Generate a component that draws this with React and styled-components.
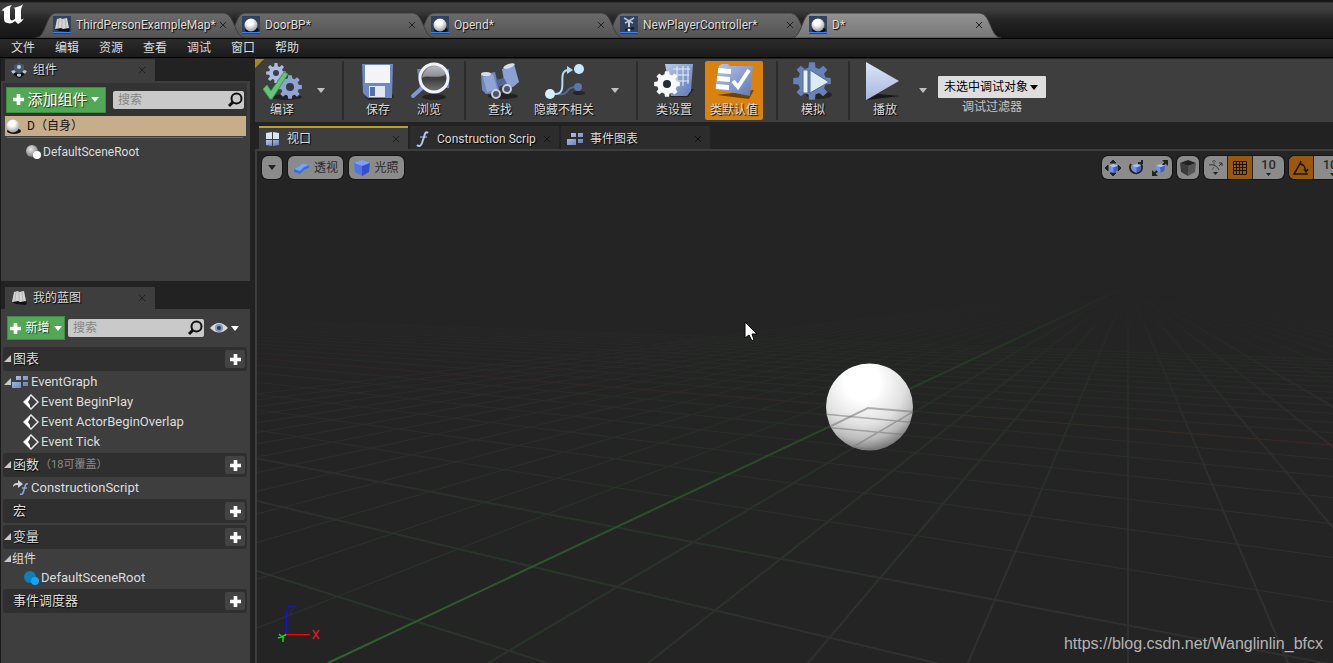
import React, { useState } from 'react';
import styled, { createGlobalStyle } from 'styled-components';

const GlobalStyle = createGlobalStyle`
  * {
    box-sizing: border-box;
  }

  body {
    margin: 0;
    background: #222;
    color: #dcdcdc;
    font-family: Roboto, 'Noto Sans CJK SC', sans-serif;
    font-size: 13px;
    line-height: 20px;
  }

  button, input, select {
    font: inherit;
    color: inherit;
    border: 0;
    margin: 0;
    padding: 0;
    background: none;
  }

  svg {
    display: block;
    flex: none;
  }
`;

const Page = styled.div`
  display: flex;
  flex-direction: column;
  min-height: 100vh;
  overflow: hidden;
`;

const TitleBar = styled.header`
  display: flex;
  align-items: flex-end;
  height: 38px;
  background: linear-gradient(#141414 0, #1c1c1c 2px, #414141 3px, #3c3c3c 10px, #242424 20px, #151515 38px);
`;

const LogoBox = styled.div`
  width: 36px;
  height: 38px;
  padding: 4px 0 0 1px;
`;

const FileTab = styled.div`
  position: relative;
  display: flex;
  align-items: center;
  width: 209px;
  height: 25px;
  margin-right: -20px;
  padding: 0 17px 2px 17px;
  z-index: ${props => props.order};
  font-size: 12px;
  text-shadow: 1px 1px 1px #000;
`;

const FileTabShape = styled.svg`
  position: absolute;
  inset: 0;
  z-index: -1;
`;

const FileTabName = styled.button`
  width: 143px;
  margin-left: 5px;
  text-align: left;
  white-space: nowrap;
  text-shadow: inherit;
`;

const CloseButton = styled.button`
  display: flex;
  align-items: center;
  justify-content: center;
  width: 10px;
  height: 16px;
  color: ${props => props.tone || '#222'};
`;

const MenuBar = styled.nav`
  display: flex;
  gap: 20px;
  height: 20px;
  padding-left: 11px;
  border-top: 1px solid #000;
  border-bottom: 1px solid #000;
  background: linear-gradient(#2b2b2b, #1b1b1b);
`;

const MenuItem = styled.button`
  font-size: 12px;
  line-height: 18px;
`;

const Workspace = styled.div`
  display: flex;
  flex: 1;
  gap: 5px;
`;

const Sidebar = styled.aside`
  display: flex;
  flex-direction: column;
  width: 250px;
  border-left: 1px solid #1a1a1a;
`;

const PanelTab = styled.div`
  display: flex;
  align-items: center;
  width: 150px;
  height: 22px;
  margin: ${props => props.top}px 0 0 4px;
  padding: 0 8px 0 6px;
  background: #3e3e3e;
  font-size: 12px;
  text-shadow: 1px 1px 1px #000;

  span {
    flex: 1;
    margin-left: 6px;
  }
`;

const PanelBody = styled.section`
  background: #3e3e3e;
  padding: 2px 3px 2px 2px;
  ${props => (props.fill ? 'flex: 1;' : 'height: 200px;')}
`;

const PanelToolbar = styled.div`
  display: flex;
  align-items: center;
  gap: ${props => (props.small ? 3 : 7)}px;
  height: ${props => (props.small ? 34 : 33)}px;
  padding: 0 ${props => (props.small ? 4 : 3)}px;
  background: ${props => (props.small ? 'none' : '#333')};
`;

const GreenButton = styled.button`
  display: flex;
  align-items: center;
  justify-content: center;
  gap: ${props => (props.small ? 4 : 3)}px;
  width: ${props => (props.small ? 58 : 102)}px;
  height: ${props => (props.small ? 24 : 26)}px;
  border: 1px solid #3f8c42;
  background: #52a854;
  color: #fff;
  font-size: ${props => (props.small ? 12 : 15)}px;
  white-space: nowrap;
  text-shadow: 1px 1px 1px #1a3a1a;
`;

const SearchBox = styled.label`
  display: flex;
  align-items: center;
  width: ${props => (props.small ? 136 : 131)}px;
  height: 18px;
  border-radius: 2px;
  background: #c9c9c9;

  input {
    flex: 1;
    min-width: 0;
    padding-left: 5px;
    color: #222;
    font-size: 12px;
    line-height: 18px;
    outline: none;
  }

  input::placeholder {
    color: #858585;
    opacity: 1;
  }
`;

const EyeButton = styled.button`
  display: flex;
  align-items: center;
  gap: 3px;
  margin-left: 3px;
`;

const SelfRow = styled.div`
  display: flex;
  align-items: center;
  gap: 6px;
  height: 20px;
  margin: 0 1px 0 2px;
  background: #c8ad8a;
  color: #111;
  font-size: 12px;
`;

const RowDivider = styled.div`
  height: 1px;
  margin: 1px 4px 3px;
  background: #6a6a6a;
`;

const TreeRow = styled.div`
  display: flex;
  align-items: center;
  height: ${props => (props.short ? 18 : 20)}px;
  padding: 1px 0 0 ${props => props.indent}px;
  font-size: ${props => (props.compact || props.short ? 12 : 13)}px;
  white-space: nowrap;
`;

const RowText = styled.span`
  margin-left: 2px;
`;

const SectionHeader = styled.div`
  display: flex;
  align-items: center;
  height: 24px;
  margin-top: 2px;
  padding-right: 2px;
  border-radius: 3px;
  background: #2f2f2f;
  text-shadow: 1px 1px 1px #000;
`;

const SectionName = styled.span`
  flex: 1;
  display: flex;
  align-items: center;
  gap: 1px;
  padding-left: ${props => (props.leaf ? 10 : 0)}px;
`;

const SectionNote = styled.small`
  color: #8a8a8a;
  font-size: 11px;
  text-shadow: none;
`;

const AddButton = styled.button`
  display: flex;
  align-items: center;
  justify-content: center;
  width: 20px;
  height: 18px;
  border-radius: 2px;
  background: #434343;
  color: #fff;
`;

const Main = styled.main`
  display: flex;
  flex-direction: column;
  flex: 1;
  min-width: 0;
`;

const Toolbar = styled.div`
  display: flex;
  align-items: stretch;
  height: 63px;
  margin-top: 1px;
  padding: 2px 0;
  background: linear-gradient(135deg, #a8871c 6px, #3e3e3e 7px);
`;

const Tool = styled.button`
  display: flex;
  flex-direction: column;
  align-items: center;
  width: ${props => props.width}px;
  margin: ${props => (props.active ? '0 4px' : 0)};
  padding-top: 1px;
  border-radius: 2px;
  background: ${props => (props.active ? '#d9820f' : 'none')};
  font-size: 12px;
  line-height: 17px;
  white-space: nowrap;
  text-shadow: 1px 1px 1px #000;
`;

const ToolArrow = styled.button`
  display: flex;
  align-items: center;
  justify-content: center;
  width: 24px;
`;

const Separator = styled.div`
  width: 2px;
  margin: 0 9px;
  background: #2b2b2b;
`;

const DebugFilter = styled.label`
  display: flex;
  flex-direction: column;
  align-items: center;
  margin-left: 3px;
  padding-top: 15px;
  font-size: 12px;
  line-height: 18px;
  color: #c4c4c4;
`;

const SelectWrap = styled.span`
  display: flex;
  align-items: center;
  width: 108px;
  height: 22px;
  padding: 0 8px 0 6px;
  border-radius: 1px;
  background: #dedede;
  color: #000;

  select {
    flex: 1;
    min-width: 0;
    appearance: none;
    line-height: 20px;
    outline: none;
  }
`;

const DocTabs = styled.div`
  display: flex;
  gap: 2px;
  padding: 4px 0 0 4px;
  border-bottom: 2px solid #3e3e3e;
`;

const DocTab = styled.div`
  display: flex;
  align-items: center;
  width: 149px;
  height: 23px;
  padding: 0 7px 0 6px;
  border-top: 2px solid ${props => (props.active ? '#bfa01e' : '#2c2c2c')};
  background: ${props => (props.active ? '#3e3e3e' : '#2c2c2c')};
  font-size: 12px;
  text-shadow: 1px 1px 1px #000;

  span {
    flex: 1;
    margin-left: 6px;
    white-space: nowrap;
  }
`;

const Viewport = styled.section`
  position: relative;
  flex: 1;
  display: flex;
  flex-direction: column;
  justify-content: space-between;
  min-height: 500px;
  overflow: hidden;
  border-left: 2px solid #3e3e3e;
  background: #242424;
`;

const Scene = styled.svg`
  position: absolute;
  inset: 0;
  width: 100%;
  height: 100%;
`;

const ViewToolbar = styled.div`
  position: relative;
  display: flex;
  gap: 6px;
  margin-right: -18px;
  padding: 5px 0 0 5px;
`;

const ViewGroup = styled.div`
  display: flex;
  height: 23px;
  border-radius: 6px;
  overflow: hidden;
  background: #8b8b8b;
  box-shadow: 0 0 0 1px #151515;
  margin-left: ${props => (props.push ? 'auto' : 0)};
  margin-right: ${props => (props.tight ? -1 : 0)}px;
`;

const ViewButton = styled.button`
  position: relative;
  display: flex;
  align-items: center;
  justify-content: center;
  gap: 4px;
  width: ${props => props.width}px;
  border-right: ${props => (props.split ? '1px solid #222' : 0)};
  background: ${props => (props.on ? '#98590f' : 'none')};
  color: #2b2b2b;
  font-size: 12px;
`;

const SnapButton = styled(ViewButton)`
  flex-direction: column;
  gap: 0;
  font-size: 13px;
  font-weight: 500;
  line-height: 14px;
`;

const Watermark = styled.a`
  position: relative;
  align-self: flex-end;
  padding: 0 10px 8px 0;
  color: #b4b4b4;
  font-family: 'Liberation Sans', Arial, sans-serif;
  font-size: 16px;
  line-height: 22px;
  text-decoration: none;
`;

const Close = () => (
  <svg width="6" height="6" viewBox="0 0 6 6" stroke="currentColor" strokeWidth="1">
    <path d="M0 0L6 6M6 0L0 6" />
  </svg>
);

const Plus = ({ size = 11 }) => (
  <svg width={size} height={size} viewBox="0 0 12 12" fill="#fff">
    <path d="M4 0h4v4h4v4H8v4H4V8H0V4h4z" />
  </svg>
);

const Arrow = ({ color = '#fff', width = 8 }) => (
  <svg width={width} height="5" viewBox="0 0 8 5" fill={color}>
    <path d="M0 0H8L4 5z" />
  </svg>
);

const Expander = () => (
  <svg width="9" height="8" viewBox="0 0 9 8" fill="#c8c8c8">
    <path d="M8 0V7H1z" />
  </svg>
);

const Magnifier = () => (
  <svg width="17" height="16" viewBox="0 0 17 16" fill="none" stroke="#111">
    <circle cx="9.500" cy="6.500" r="5" strokeWidth="2" />
    <path d="M6 10L2 14" strokeWidth="3" />
  </svg>
);

const Eye = () => (
  <svg width="18" height="12" viewBox="0 0 18 12">
    <path d="M0 6Q9 -4 18 6Q9 15 0 6z" fill="#d5d8dc" />
    <circle cx="9" cy="6" r="4" fill="#8298be" />
    <circle cx="9" cy="6" r="2" fill="#2b3c5c" />
  </svg>
);

const Logo = () => (
  <svg width="24" height="22" viewBox="0 0 24 22" fill="#fff">
    <path d="M0 8C2 4 6 2 11 1C9 3 9 4 9 6V14C9 16 11 17 12 16L14 15V5C14 4 13 4 12 4C15 3 19 3 22 0C21 3 20 4 20 6V14C20 16 21 16 23 14C22 17 19 19 17 20L14 17C12 19 9 20 7 19C5 19 3 18 3 15V8C3 6 1 6 0 8z" />
  </svg>
);

const SphereIcon = ({ size = 16 }) => (
  <svg width={size} height={size} viewBox="0 0 16 16">
    <ellipse cx="9" cy="13" rx="7" ry="3" fill="#111" />
    <circle cx="8" cy="8" r="6.500" fill="url(#ball)" />
  </svg>
);

const RootIcon = ({ blue }) => (
  <svg width="16" height="16" viewBox="0 0 16 16">
    <circle cx="7" cy="7" r="6" fill={blue ? '#0d7fbe' : 'url(#ballDim)'} />
    <circle cx="12" cy="11" r="4" fill={blue ? '#12a5ff' : '#fff'} />
  </svg>
);

const BookIcon = () => (
  <svg width="16" height="16" viewBox="0 0 16 16">
    <path d="M1 12L5 14L15 15L16 12L12 10z" fill="#111" />
    <path d="M3 2L7 1L8 2L13 1L15 11L9 12L7 11L1 12z" fill="#d4d4d4" />
    <path d="M8 2V11M5 2L4 11M11 2L12 11" stroke="#b4b4b4" fill="none" />
  </svg>
);

const ControllerIcon = () => (
  <svg width="16" height="16" viewBox="0 0 16 16" fill="none" stroke="#bcc7d4">
    <path d="M3 1L8 4L13 1M4 6L8 4L12 6" strokeWidth="1.500" />
    <path d="M8 5V10" strokeWidth="2" />
    <path d="M4 13L13 11" stroke="#141a26" strokeWidth="2" />
    <circle cx="8" cy="13" r="1" fill="#fff" stroke="#fff" />
  </svg>
);

const TabIcon = ({ kind }) => (
  <svg width="18" height="18" viewBox="0 0 18 18">
    <rect width="18" height="18" fill="#31425f" />
    <g transform="translate(1 1)">
      {kind === 'map' && <BookIcon />}
      {kind === 'ball' && <SphereIcon />}
      {kind === 'controller' && <ControllerIcon />}
    </g>
    <rect y="16" width="18" height="1" fill="#3f82f2" />
  </svg>
);

const ComponentsIcon = () => (
  <svg width="16" height="15" viewBox="0 0 16 15">
    <path d="M2 9L8 14L14 9" stroke="#101010" strokeWidth="3" fill="none" />
    <path d="M3 2L8 0L13 2V8L8 10L3 8z" fill="#46566e" />
    <circle cx="8" cy="4" r="2" fill="#b9c9de" />
    <path d="M0 8L3 7L5 9L2 11zM16 8L13 7L11 9L14 11zM6 11h4v2l-2 1l-2 -1z" fill="#b8c3d2" />
  </svg>
);

const GraphIcon = () => (
  <svg width="17" height="14" viewBox="0 0 17 14" fill="url(#steel)">
    <path d="M4 1h5v4H4zM11 1h5v4h-5zM0 7h9v6H0zM11 7h5v4h-5z" />
  </svg>
);

const ViewportIcon = () => (
  <svg width="16" height="16" viewBox="0 0 16 16" fill="url(#steel)">
    <path d="M1 2L7 1V8H1zM8 1L14 2V8H8z" fill="#dbe6f5" />
    <path d="M1 9h6v6L1 14zM8 9h6v5L8 15z" />
  </svg>
);

const FunctionIcon = () => (
  <svg width="15" height="18" viewBox="0 0 15 18" fill="none" stroke="#b7c6ee">
    <path d="M12 3C10 1 9 3 8 7L6 13C5 16 3 17 1 15" strokeWidth="2" />
    <path d="M4 7H11" />
  </svg>
);

const ScriptIcon = () => (
  <svg width="17" height="17" viewBox="0 0 17 17" fill="none">
    <path d="M1 8C1 4 4 4 6 4V1L11 5L6 9V6C4 6 3 6 1 8z" fill="#cdd3dc" />
    <path d="M16 5C13 4 13 8 12 11C11 15 10 16 8 15M10 9H15" stroke="#8ea3dc" strokeWidth="1.500" />
  </svg>
);

const EventIcon = () => (
  <svg width="16" height="16" viewBox="0 0 16 16">
    <path d="M8 1L15 8L8 15L1 8z" fill="none" stroke="#e8e8e8" strokeWidth="1.500" />
    <path d="M7 2V5L5 8L7 11V14L1 8z" fill="#fff" />
  </svg>
);

const gearPath = (cx, cy, outer, inner, teeth = 8) => {
  const points = [];
  for (let i = 0; i < teeth; i += 1) {
    const step = (Math.PI * 2) / teeth;
    [[-0.32, inner], [-0.2, outer], [0.2, outer], [0.32, inner]].forEach(([shift, radius]) => {
      const angle = (i + shift) * step;
      points.push(`${cx + Math.cos(angle) * radius} ${cy + Math.sin(angle) * radius}`);
    });
  }
  return `M${points.join('L')}z`;
};

const ToolIcon = ({ name }) => (
  <svg width="42" height="40" viewBox="0 0 42 40">
    {name === 'compile' && (
      <>
        <ellipse cx="25" cy="35" rx="16" ry="3" fill="#222" />
        <path d={gearPath(15, 11, 10, 7)} fill="#aebde0" />
        <circle cx="15" cy="11" r="3" fill="#3a3f4a" />
        <path d={gearPath(29, 25, 12, 9)} fill="#8fa3d2" />
        <circle cx="29" cy="25" r="4" fill="#343842" />
        <path d="M2 27L6 23L10 29L23 10L27 12L11 37H9z" fill="#63c677" stroke="#42955a" />
      </>
    )}
    {name === 'save' && (
      <>
        <path d="M8 35L12 38L37 36L36 32z" fill="#222" />
        <path d="M5 2H36L35 36H11L6 31z" fill="#6f88c6" />
        <path d="M8 3H33V21H8z" fill="#f2f5fa" />
        <path d="M12 24H28V35H12z" fill="#e2e8f2" />
        <path d="M13 25H18V34H13z" fill="#5470b2" />
      </>
    )}
    {name === 'browse' && (
      <>
        <ellipse cx="26" cy="35" rx="12" ry="3" fill="#222" />
        <path d="M9 7H41V26H12z" fill="#6c83b8" />
        <path d="M15 25L5 34" stroke="#7e98d8" strokeWidth="4" strokeLinecap="round" />
        <circle cx="26" cy="16" r="14" fill="url(#lens)" stroke="#eef3fb" strokeWidth="3" />
        <path d="M14 16C19 12 30 18 38 12C36 2 17 0 14 16z" fill="#cfd6e0" opacity=".5" />
      </>
    )}
    {name === 'find' && (
      <>
        <ellipse cx="24" cy="34" rx="15" ry="3" fill="#222" />
        <path d="M2 13L16 10L20 27L16 31L7 32L3 28z" fill="#7188bd" />
        <path d="M23 7L35 2L40 20L34 25L26 24z" fill="#8ba1d3" />
        <path d="M17 18L25 16L28 22L19 25z" fill="#526798" />
        <path d="M4 15L14 12L18 27L8 30z" fill="#8fa5d6" />
        <ellipse cx="7" cy="12" rx="5" ry="2" fill="#d5dff2" />
        <ellipse cx="30" cy="4" rx="6" ry="2" fill="#d5dff2" transform="rotate(-20 30 4)" />
        <circle cx="17" cy="32" r="4" fill="#4b5566" stroke="#c5cedb" strokeWidth="2" />
        <circle cx="28" cy="27" r="4" fill="#4b5566" stroke="#c5cedb" strokeWidth="2" />
      </>
    )}
    {name === 'hide' && (
      <>
        <ellipse cx="36" cy="31" rx="6" ry="2" fill="#252525" />
        <path d="M12 32H16C26 34 22 24 34 25" stroke="#52698f" strokeWidth="2" fill="none" />
        <circle cx="35" cy="25" r="4" fill="#5975b2" />
        <path d="M8 32H12C27 32 12 8 26 8" stroke="#aedcf7" strokeWidth="2" fill="none" />
        <path d="M24 4L30 8L24 12z" fill="#aedcf7" />
        <circle cx="36" cy="7" r="5" fill="#c6e8ff" />
        <circle cx="7" cy="32" r="5" fill="#d6efff" />
      </>
    )}
    {name === 'settings' && (
      <>
        <path d="M17 35L35 35L41 27L22 28z" fill="#222" />
        <path d="M12 2H40L38 29L34 34H18z" fill="url(#steel)" />
        <path d="M20 7H37M20 13H36M24 19H36M24 4V20M30 4V24M35 4V22" stroke="#e6edfa" fill="none" />
        <path d={gearPath(14, 22, 13, 10)} fill="#f7f9fc" />
        <circle cx="14" cy="22" r="4" fill="#222b3b" />
      </>
    )}
    {name === 'defaults' && (
      <>
        <path d="M4 33L36 37L41 28z" fill="#6f4208" />
        <path d="M6 4L9 2H15L17 4H40L37 34L2 27z" fill="url(#steel)" />
        <path d="M5 6L18 7V12L5 11zM4 14L17 15V20L4 19zM3 22L16 23V28L3 27z" fill="#fff" />
        <path d="M20 19L25 25L36 8" stroke="#fff" strokeWidth="4" fill="none" />
      </>
    )}
    {name === 'simulate' && (
      <>
        <ellipse cx="27" cy="33" rx="13" ry="4" fill="#252525" />
        <path d={gearPath(20, 19, 19, 14)} fill="#6881b8" />
        <path d="M11 8H16V31H11z" fill="#e5f2f4" stroke="#526a97" />
        <path d="M18 8L37 20L18 31z" fill="#dceaf2" stroke="#526a97" />
      </>
    )}
    {name === 'play' && (
      <>
        <path d="M3 38L14 32L36 34z" fill="#171717" />
        <path d="M2 0L35 19L2 38z" fill="url(#playFill)" />
      </>
    )}
  </svg>
);

const PerspectiveIcon = () => (
  <svg width="17" height="14" viewBox="0 0 17 14">
    <path d="M1 8L5 6L10 2L16 4V7L11 9L7 13L1 11z" fill="#3c72d2" />
    <path d="M1 8L5 6L10 2L16 4L11 6L7 10z" fill="#72a8f2" />
  </svg>
);

const Cube = ({ size = 16, top = '#7aa0fb', left = '#5076e6', right = '#3550c8' }) => (
  <svg width={size} height={size} viewBox="0 0 16 16">
    <path d="M0 3L8 0L16 3L8 6z" fill={top} />
    <path d="M0 3L8 6V16L1 12z" fill={left} />
    <path d="M16 3L8 6V16L15 12z" fill={right} />
  </svg>
);

const TransformIcon = ({ kind }) => (
  <svg width="18" height="18" viewBox="0 0 18 18" fill="none" stroke="#222" strokeWidth="2">
    {kind === 'move' && <path d="M9 1L12 4H6zM9 17L12 14H6zM1 9L4 6V12zM17 9L14 6V12z" fill="#222" strokeWidth="1" />}
    {kind === 'rotate' && <path d="M4 5A6 6 0 1 0 14 5M11 4H15V1" />}
    {kind === 'scale' && (
      <>
        <path d="M2 16L16 2" />
        <path d="M17 1V7L11 1zM1 17V11L7 17z" fill="#222" stroke="none" />
      </>
    )}
    <g transform="translate(5 5)" stroke="none">
      <Cube size={9} top="#a7c0ff" left="#6f95f0" right="#4062c8" />
    </g>
  </svg>
);

const SurfaceSnapIcon = () => (
  <svg width="16" height="12" viewBox="0 0 16 12" fill="none" stroke="#333">
    <path d="M1 6C6 5 9 7 11 11M11 7L14 4M11 4H14V7" />
    <path d="M6 6V1M4 3L6 1L8 3M4 11L6 8" stroke="#555" />
  </svg>
);

const GridIcon = () => (
  <svg width="14" height="14" viewBox="0 0 14 14" fill="none" stroke="#221400">
    <path d="M.5.5H13.500V13.500H.5zM3.500.5V13M6.500.5V13M9.500.5V13M.5 3.500H13M.5 6.500H13M.5 9.500H13" />
  </svg>
);

const AngleIcon = () => (
  <svg width="16" height="16" viewBox="0 0 16 16" fill="none" stroke="#221400" strokeWidth="1.500">
    <path d="M15 14H1L8 2M7 4C11 4 12 7 13 12M10 5L7 4L8 1M11 9L13 12L15 9" />
  </svg>
);

const Defs = () => (
  <svg width="0" height="0" style={{ position: 'absolute' }}>
    <defs>
      <radialGradient id="ball" cx=".42" cy=".3" r=".75">
        <stop offset="0.300" stopColor="#fff" />
        <stop offset="1" stopColor="#909090" />
      </radialGradient>
      <radialGradient id="ballDim" cx=".4" cy=".35" r=".7">
        <stop offset="0" stopColor="#e8e8e8" />
        <stop offset="1" stopColor="#777" />
      </radialGradient>
      <linearGradient id="steel" x1="0" y1="0" x2="1" y2="1">
        <stop offset="0" stopColor="#b9c8e6" />
        <stop offset="1" stopColor="#5d78b6" />
      </linearGradient>
      <linearGradient id="lens" x1="0" y1="0" x2="0" y2="1">
        <stop offset="0" stopColor="#b0b0b0" />
        <stop offset="0.500" stopColor="#3a3a3a" />
        <stop offset="1" stopColor="#777" />
      </linearGradient>
      <linearGradient id="playFill" x1="0" y1="0" x2="0" y2="1">
        <stop offset="0" stopColor="#dce5f8" />
        <stop offset="1" stopColor="#a7b7dc" />
      </linearGradient>
    </defs>
  </svg>
);

// Both families of floor lines meet on the horizon, one to the right and one far left.
const HORIZON = 135;
const VANISH_A = 871;
const VANISH_B = -901;
const depthLines = Array.from({ length: 33 }, (_, i) => i - 19);
const crossLines = Array.from({ length: 24 }, (_, i) => i);
const crossY = (n, x) => HORIZON + ((x - VANISH_B) * 0.4853) / (1.534 + 0.5 * n);

const FloorGrid = () => (
  <g fill="none">
    <g mask="url(#fade)">
      {depthLines.map(k => (
        <path
          key={k}
          d={`M${VANISH_A} ${HORIZON}L${VANISH_A + k * 160} 512`}
          stroke="url(#floor)"
          strokeWidth={Math.abs(k) < 5 ? 2 : 1}
        />
      ))}
      {crossLines.filter(n => n !== 9).map(n => (
        <path
          key={n}
          d={`M0 ${crossY(n, 0)}L1076 ${crossY(n, 1076)}`}
          stroke="url(#floor)"
          strokeWidth={n < 3 ? 2 : 1}
        />
      ))}
    </g>
    <path d={`M0 ${crossY(9, 0)}L1076 ${crossY(9, 1076)}`} stroke="url(#redAxis)" />
    <path d={`M${VANISH_A} ${HORIZON}L${VANISH_A - 800} 512`} stroke="url(#greenAxis)" strokeWidth="2" />
  </g>
);

const ViewportScene = () => (
  <Scene viewBox="0 0 1076 512" preserveAspectRatio="xMinYMin slice" aria-hidden="true">
    <defs>
      <linearGradient id="fadeRamp" x1="0" y1="145" x2="0" y2="400" gradientUnits="userSpaceOnUse">
        <stop offset="0" stopColor="#000" />
        <stop offset="0.250" stopColor="#777" />
        <stop offset="0.600" stopColor="#bbb" />
        <stop offset="1" stopColor="#fff" />
      </linearGradient>
      <mask id="fade" maskUnits="userSpaceOnUse" x="0" y="0" width="1076" height="512">
        <rect width="1076" height="512" fill="url(#fadeRamp)" />
      </mask>
      <linearGradient id="floor" x1="280" y1="0" x2="620" y2="720" gradientUnits="userSpaceOnUse">
        <stop offset="0" stopColor="#303030" />
        <stop offset="0.250" stopColor="#2f302f" />
        <stop offset="0.450" stopColor="#273627" />
        <stop offset="0.600" stopColor="#2a322a" />
        <stop offset="0.750" stopColor="#303030" />
      </linearGradient>
      <linearGradient id="redAxis" x1="0" y1="0" x2="1076" y2="0" gradientUnits="userSpaceOnUse">
        <stop offset="0" stopColor="#312424" />
        <stop offset="0.450" stopColor="#332826" />
        <stop offset="0.620" stopColor="#2a3226" />
        <stop offset="1" stopColor="#422424" />
      </linearGradient>
      <linearGradient id="greenAxis" x1="71" y1="512" x2="871" y2="135" gradientUnits="userSpaceOnUse">
        <stop offset="0" stopColor="#2d642d" />
        <stop offset="0.600" stopColor="#274827" />
        <stop offset="0.850" stopColor="#253225" />
        <stop offset="1" stopColor="#242424" />
      </linearGradient>
      <radialGradient id="sphere" cx=".42" cy=".22" r=".82">
        <stop offset="0.250" stopColor="#fff" />
        <stop offset="0.600" stopColor="#e0e0e0" />
        <stop offset="0.800" stopColor="#b8b8b8" />
        <stop offset="1" stopColor="#666" />
      </radialGradient>
      <clipPath id="sphereClip">
        <circle cx="612.500" cy="256" r="43.500" />
      </clipPath>
    </defs>

    <FloorGrid />

    <circle cx="612.500" cy="256" r="43.500" fill="url(#sphere)" />
    <g clipPath="url(#sphereClip)" stroke="#777" strokeOpacity=".55" fill="none">
      <path d="M574 275L611 257L660 261" strokeWidth="2" />
      <path d="M566 263L660 272M566 276L660 285M656 261L596 296M592 296L640 301" strokeWidth="1.500" />
    </g>

    <path d="M488 171V187L492 184L495 190L497 189L495 183H500z" fill="#fff" stroke="#000" />

    <g fill="none">
      <path d="M29.500 459V484" stroke="#1414d8" />
      <path d="M29 483.500H53" stroke="#f00" />
      <path d="M31 455.500H38L32 462.500H38" stroke="#1414d8" />
      <path d="M56 479L62 488M62 479L56 488" stroke="#e01818" strokeWidth="1.500" />
      <path d="M29 484L21 487M22 483L26 487L29 483M26 487V491" stroke="#0ee00e" strokeWidth="1.500" />
    </g>
  </Scene>
);

const fileTabs = [
  { name: 'ThirdPersonExampleMap*', kind: 'map' },
  { name: 'DoorBP*', kind: 'ball' },
  { name: 'Opend*', kind: 'ball' },
  { name: 'NewPlayerController*', kind: 'controller' },
  { name: 'D*', kind: 'ball' },
];

const menus = ['文件', '编辑', '资源', '查看', '调试', '窗口', '帮助'];
const events = ['Event BeginPlay', 'Event ActorBeginOverlap', 'Event Tick'];

const TitleTab = ({ tab, index, active, onSelect }) => (
  <FileTab order={active ? 10 : 9 - index}>
    <FileTabShape width="209" height="25" viewBox="0 0 209 25">
      <defs>
        <linearGradient id={`tab${index}`} x1="0" y1="0" x2="0" y2="1">
          <stop offset="0" stopColor={active ? '#929292' : '#6b6b6b'} />
          <stop offset="1" stopColor={active ? '#777' : '#545454'} />
        </linearGradient>
      </defs>
      <path
        d="M0 25C10 24 10 1 19 0H188C199 1 198 24 209 25z"
        fill={`url(#tab${index})`}
        stroke="#3c3c3c"
        strokeWidth="1"
      />
    </FileTabShape>
    <TabIcon kind={tab.kind} />
    <FileTabName onClick={onSelect}>{tab.name}</FileTabName>
    <CloseButton aria-label="关闭"><Close /></CloseButton>
  </FileTab>
);

const Section = ({ name, note, leaf }) => (
  <SectionHeader>
    <SectionName leaf={leaf ? 1 : undefined}>
      {!leaf && <Expander />}
      {name}
      {note && <SectionNote>{note}</SectionNote>}
    </SectionName>
    <AddButton aria-label={`添加${name}`}><Plus /></AddButton>
  </SectionHeader>
);

const ToolItem = ({ icon, label, width, active }) => (
  <Tool width={width} active={active ? 1 : undefined}>
    <ToolIcon name={icon} />
    {label}
  </Tool>
);

const ToolMenu = () => (
  <ToolArrow aria-label="选项"><Arrow color="#c0c0c0" /></ToolArrow>
);

const App = () => {
  const [activeTab, setActiveTab] = useState(4);

  return (
    <Page>
      <GlobalStyle />
      <Defs />
      <TitleBar>
        <LogoBox><Logo /></LogoBox>
        {fileTabs.map((tab, index) => (
          <TitleTab
            key={tab.name}
            tab={tab}
            index={index}
            active={index === activeTab}
            onSelect={() => setActiveTab(index)}
          />
        ))}
      </TitleBar>

      <MenuBar>
        {menus.map(menu => <MenuItem key={menu}>{menu}</MenuItem>)}
      </MenuBar>

      <Workspace>
        <Sidebar>
          <PanelTab top={1}>
            <ComponentsIcon />
            <span>组件</span>
            <CloseButton aria-label="关闭"><Close /></CloseButton>
          </PanelTab>
          <PanelBody>
            <PanelToolbar>
              <GreenButton><Plus />添加组件<Arrow /></GreenButton>
              <SearchBox>
                <input type="text" placeholder="搜索" aria-label="搜索组件" />
                <Magnifier />
              </SearchBox>
            </PanelToolbar>
            <SelfRow><SphereIcon />D（自身）</SelfRow>
            <RowDivider />
            <TreeRow indent={22} compact={1}><RootIcon /><RowText>DefaultSceneRoot</RowText></TreeRow>
          </PanelBody>

          <PanelTab top={6}>
            <BookIcon />
            <span>我的蓝图</span>
            <CloseButton aria-label="关闭"><Close /></CloseButton>
          </PanelTab>
          <PanelBody fill={1}>
            <PanelToolbar small={1}>
              <GreenButton small={1}><Plus />新增<Arrow /></GreenButton>
              <SearchBox small={1}>
                <input type="text" placeholder="搜索" aria-label="搜索蓝图" />
                <Magnifier />
              </SearchBox>
              <EyeButton aria-label="视图选项"><Eye /><Arrow /></EyeButton>
            </PanelToolbar>
            <Section name="图表" />
            <TreeRow indent={0}><Expander /><GraphIcon /><RowText>EventGraph</RowText></TreeRow>
            {events.map(event => (
              <TreeRow key={event} indent={20}><EventIcon /><RowText>{event}</RowText></TreeRow>
            ))}
            <Section name="函数" note="（18可覆盖）" />
            <TreeRow indent={9}><ScriptIcon /><RowText>ConstructionScript</RowText></TreeRow>
            <Section name="宏" leaf />
            <Section name="变量" />
            <TreeRow indent={0} short={1}><Expander />组件</TreeRow>
            <TreeRow indent={20}><RootIcon blue /><RowText>DefaultSceneRoot</RowText></TreeRow>
            <Section name="事件调度器" leaf />
          </PanelBody>
        </Sidebar>

        <Main>
          <Toolbar>
            <ToolItem icon="compile" label="编译" width={54} />
            <ToolMenu />
            <Separator />
            <ToolItem icon="save" label="保存" width={50} />
            <ToolItem icon="browse" label="浏览" width={52} />
            <Separator />
            <ToolItem icon="find" label="查找" width={50} />
            <ToolItem icon="hide" label="隐藏不相关" width={78} />
            <ToolMenu />
            <Separator />
            <ToolItem icon="settings" label="类设置" width={54} />
            <ToolItem icon="defaults" label="类默认值" width={58} active />
            <Separator />
            <ToolItem icon="simulate" label="模拟" width={52} />
            <Separator />
            <ToolItem icon="play" label="播放" width={52} />
            <ToolMenu />
            <DebugFilter>
              <SelectWrap>
                <select defaultValue="none">
                  <option value="none">未选中调试对象</option>
                </select>
                <Arrow color="#000" />
              </SelectWrap>
              调试过滤器
            </DebugFilter>
          </Toolbar>

          <DocTabs>
            <DocTab active={1}>
              <ViewportIcon />
              <span>视口</span>
              <CloseButton tone="#1c1c1c" aria-label="关闭"><Close /></CloseButton>
            </DocTab>
            <DocTab>
              <FunctionIcon />
              <span>Construction Scrip</span>
              <CloseButton tone="#111" aria-label="关闭"><Close /></CloseButton>
            </DocTab>
            <DocTab>
              <GraphIcon />
              <span>事件图表</span>
              <CloseButton tone="#111" aria-label="关闭"><Close /></CloseButton>
            </DocTab>
          </DocTabs>

          <Viewport>
            <ViewportScene />
            <ViewToolbar>
              <ViewGroup><ViewButton width={20} aria-label="视口选项"><Arrow color="#222" /></ViewButton></ViewGroup>
              <ViewGroup><ViewButton width={55}><PerspectiveIcon />透视</ViewButton></ViewGroup>
              <ViewGroup><ViewButton width={55}><Cube />光照</ViewButton></ViewGroup>

              <ViewGroup push={1} tight={1}>
                <ViewButton width={22} aria-label="移动"><TransformIcon kind="move" /></ViewButton>
                <ViewButton width={24} aria-label="旋转"><TransformIcon kind="rotate" /></ViewButton>
                <ViewButton width={24} aria-label="缩放"><TransformIcon kind="scale" /></ViewButton>
              </ViewGroup>
              <ViewGroup tight={1}>
                <ViewButton width={22} aria-label="坐标系"><Cube top="#222" left="#3c3c3c" right="#555" /></ViewButton>
              </ViewGroup>
              <ViewGroup tight={1}>
                <SnapButton width={24} split={1} aria-label="表面对齐">
                  <SurfaceSnapIcon />
                  <Arrow color="#222" width={5} />
                </SnapButton>
                <ViewButton width={25} split={1} on={1} aria-label="网格对齐"><GridIcon /></ViewButton>
                <SnapButton width={31}>10<Arrow color="#222" width={5} /></SnapButton>
              </ViewGroup>
              <ViewGroup>
                <ViewButton width={25} split={1} on={1} aria-label="旋转对齐"><AngleIcon /></ViewButton>
                <SnapButton width={37}>10°<Arrow color="#222" width={5} /></SnapButton>
              </ViewGroup>
            </ViewToolbar>
            <Watermark href="https://blog.csdn.net/Wanglinlin_bfcx">
              https://blog.csdn.net/Wanglinlin_bfcx
            </Watermark>
          </Viewport>
        </Main>
      </Workspace>
    </Page>
  );
};

export default App;
